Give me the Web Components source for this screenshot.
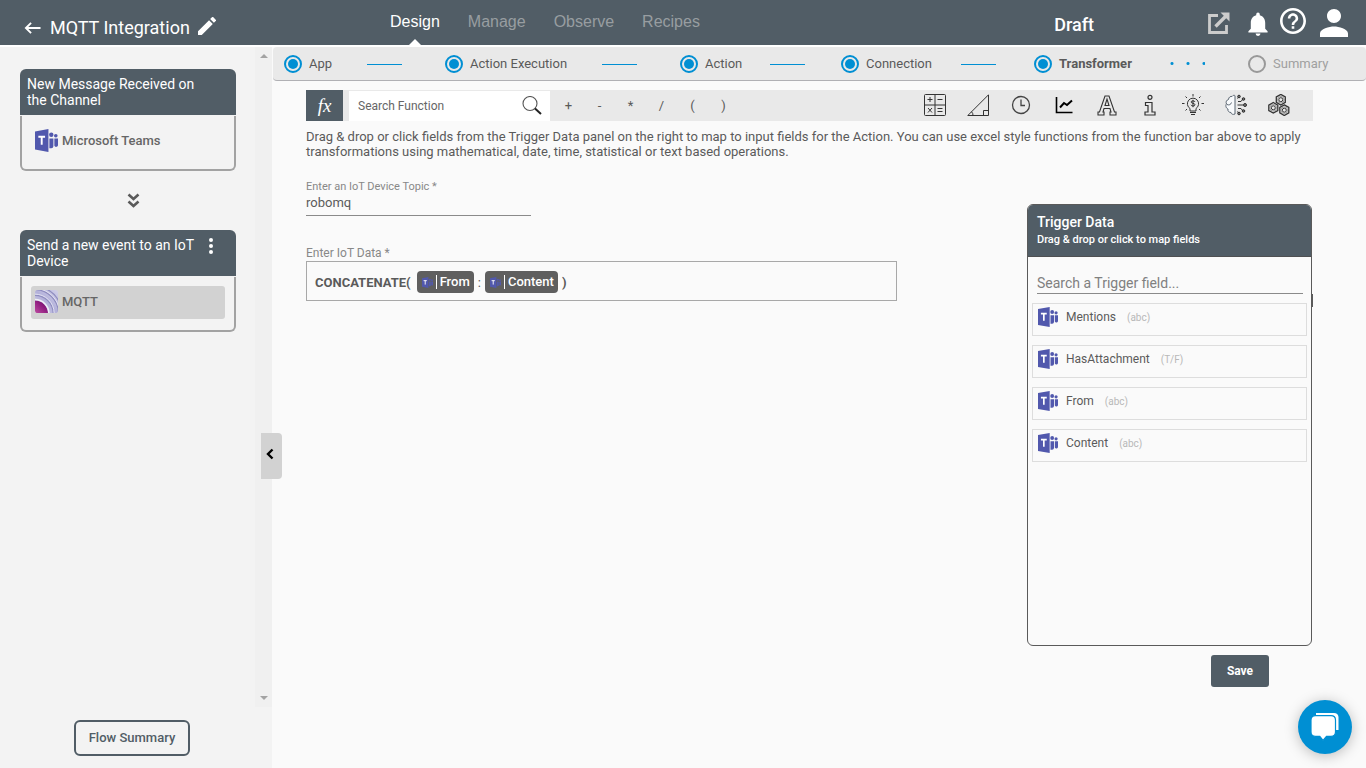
<!DOCTYPE html>
<html lang="en">
<head>
<meta charset="utf-8">
<meta name="viewport" content="width=device-width, initial-scale=1">
<title>MQTT Integration</title>
<style>
html,body{margin:0;height:100%}
body{font-family:Roboto,"Liberation Sans",sans-serif;font-size:13px;color:#5a5a5a;background:#fafafa;
--slate:#515d66;--blue:#008fd3;--bar:#e9e9e9}
</style>
</head>
<body>
<flow-app></flow-app>
<script>
const base = '*{box-sizing:border-box}button,input{font:inherit;color:inherit;margin:0}button{border:0;background:none;padding:0;cursor:pointer}a{color:inherit;text-decoration:none}';
function define(name, css, html, setup) {
  const t = document.createElement('template');
  t.innerHTML = '<style>' + base + css + '</style>' + html;
  customElements.define(name, class extends HTMLElement {
    connectedCallback() {
      if (this.shadowRoot) return;
      this.attachShadow({mode: 'open'}).append(t.content.cloneNode(true));
      if (setup) setup(this, this.shadowRoot);
    }
  });
}

/* Icon set: [viewBox, markup] */
const gear = (x, y) => `<g transform="translate(${x} ${y})"><path d="M0-5.300 4.500-2.700V2.700L0 5.300-4.500 2.700V-2.700Z" stroke-width="1.300"/><circle r="2"/><circle r="3.300" stroke-width=".4"/></g>`;
const icons = {
  back: ['0 0 18 14', '<path d="M17.500 7H2M7.500 1.500 2 7l5.500 5.500" fill="none" stroke="currentColor" stroke-width="2"/>'],
  pencil: ['3 3 18 18', '<path fill="currentColor" d="M3 17.250V21h3.750L17.810 9.940l-3.750-3.750L3 17.250zM20.710 7.040a1 1 0 0 0 0-1.410l-2.340-2.340a1 1 0 0 0-1.410 0l-1.830 1.830 3.750 3.750 1.830-1.830z"/>'],
  open: ['0 0 22 22', '<path d="M10 3.500H1.500v17h17V13" fill="none" stroke="currentColor" stroke-width="2.800"/><path d="m7.500 14.500 11-11" stroke="currentColor" stroke-width="3.400"/><path d="M12.500.5H21.500V9.500Z" fill="currentColor"/>'],
  bell: ['4 2 16 20', '<path fill="currentColor" d="M12 22c1.100 0 2-.9 2-2h-4a2 2 0 0 0 2 2zm6-6v-5c0-3.070-1.640-5.640-4.500-6.320V4a1.500 1.500 0 0 0-3 0v.68C7.630 5.360 6 7.920 6 11v5l-2 2v1h16v-1l-2-2z"/>'],
  help: ['2 2 20 20', '<path fill="currentColor" d="M11 18h2v-2h-2v2zm1-16C6.480 2 2 6.480 2 12s4.480 10 10 10 10-4.480 10-10S17.520 2 12 2zm0 18c-4.410 0-8-3.590-8-8s3.590-8 8-8 8 3.590 8 8-3.590 8-8 8zm0-14c-2.210 0-4 1.790-4 4h2c0-1.100.9-2 2-2s2 .9 2 2c0 2-3 1.750-3 5h2c0-2.250 3-2.500 3-5 0-2.210-1.790-4-4-4z"/>'],
  user: ['4 4 16 16', '<path fill="currentColor" d="M12 12c2.210 0 4-1.790 4-4s-1.790-4-4-4-4 1.790-4 4 1.790 4 4 4zm0 2c-2.670 0-8 1.340-8 4v2h16v-2c0-2.660-5.330-4-8-4z"/>'],
  teams: ['0 0 24 24', '<path fill="#5158ad" d="M0 2.500 14 0v24L0 21.500Z"/><path d="M3.500 8h7M7 8v8.500" stroke="#fff" stroke-width="2" fill="none"/><circle cx="17" cy="6" r="2.300" fill="#5158ad"/><circle cx="21.700" cy="7" r="1.900" fill="#5158ad"/><path fill="#5158ad" d="M15 10h4.200v8a2.200 2.200 0 0 1-2.200 2h-2ZM20.200 10H24v6.500a2 2 0 0 1-3.800 1Z"/>'],
  mqtt: ['0 0 24 24', '<defs><linearGradient id="p" x1="0" y1="1" x2="1" y2="0"><stop offset="0" stop-color="#bd4ba0"/><stop offset=".6" stop-color="#8a1a7c"/><stop offset="1" stop-color="#6d0f68"/></linearGradient><linearGradient id="v" x1="0" y1="1" x2="1" y2="0"><stop offset="0" stop-color="#d3d1ea"/><stop offset=".5" stop-color="#b3b1da"/><stop offset="1" stop-color="#d0cfe8"/></linearGradient><clipPath id="c"><rect width="24" height="24" rx="3"/></clipPath></defs><g clip-path="url(#c)"><rect width="24" height="24" fill="url(#v)"/><path fill="url(#p)" d="M0 11A13.500 13.500 0 0 1 13.500 24H0Z"/><g fill="none"><path d="M0 10A14.500 14.500 0 0 1 14.500 24" stroke="#efeff6" stroke-width="1.600"/><path d="M0 5.500A19 19 0 0 1 19 24M1-.5A25 25 0 0 1 24.500 23M12-1A28 28 0 0 1 25 12" stroke="#8f8dbf" stroke-width="1.300"/><path d="M0 4.300A20 20 0 0 1 20 24M2-1.500A26 26 0 0 1 25.500 22" stroke="#e3e2f1" stroke-width="1"/></g></g>'],
  down: ['0 0 12 16', '<path d="m1 1.500 5 4.500 5-4.500M1 8.500 6 13l5-4.500" fill="none" stroke="currentColor" stroke-width="2.600"/>'],
  dots: ['0 0 4 16', '<g fill="currentColor"><circle cx="2" cy="2" r="2"/><circle cx="2" cy="8" r="2"/><circle cx="2" cy="14" r="2"/></g>'],
  left: ['0 0 8 12', '<path d="M6.500 1.500 2 6l4.500 4.500" fill="none" stroke="#000" stroke-width="2.400"/>'],
  search: ['0 0 20 20', '<circle cx="8" cy="7.500" r="7" fill="none" stroke="#555" stroke-width="1.100"/><path d="m13 12.500 6 5.500" stroke="#222" stroke-width="2"/>'],
  calc: ['0 0 22 22', '<g fill="none" stroke="#333"><rect x=".5" y=".5" width="21" height="21" rx="1"/><path d="M11 .5v21M.5 11h21M3.500 5.500h5M6 3v5M13.500 5.500h5M4 14l4 4.500M8 14l-4 4.500M13.500 14.500h5M13.500 17.500h5"/></g>'],
  triangle: ['0 0 22 22', '<g fill="none" stroke="#333"><path d="M21.500.8v20.700H.8ZM16.500 21v-4.500h5M4.500 17.700A5 5 0 0 1 6 21.500"/></g>'],
  clock: ['0 0 22 22', '<g fill="none" stroke="#444" stroke-width="1.300"><circle cx="11" cy="11" r="8.500"/><path d="M11 5.500v6h4"/></g>'],
  chart: ['0 0 22 22', '<g fill="none" stroke="#000" stroke-width="1.600"><path d="M3.500 3v15.500h16"/><path d="M7 13.500 11 9l3 2 5-4.500" stroke-width="2"/></g>'],
  letter: ['0 0 22 22', '<g fill="none" stroke="#333" stroke-width="1.100"><path d="M9 2h4l5.500 16h1.500v3h-6v-3h1l-1-3.500H8L7 18h1v3H2v-3h1.500Z"/><path d="M9 11.500h4L11 5Z"/></g>'],
  info: ['0 0 22 22', '<g fill="none" stroke="#333" stroke-width="1.200"><circle cx="11" cy="3.300" r="2"/><path d="M6.500 8.500h6.500v9.500h3v3H6v-3h3v-6.500H6.500Z"/></g>'],
  bulb: ['0 0 22 22', '<g fill="none" stroke="#333"><path d="M8 17v-2.500a5.600 5.600 0 1 1 6 0V17ZM8 18.500h6M9 20.500h4M11 2.500V0M2.500 9.500H0M22 9.500h-2.500M5 4 3.500 2.500M17 4l1.500-1.500M5 15l-1.500 1.500M17 15l1.500 1.500"/><path d="M13 8c0-1.500-4-1.500-4 0s4 1 4 2.800-4 1.500-4 0M11 5.800v7.400"/></g>'],
  brain: ['0 0 22 22', '<g fill="none" stroke="#5b6672"><path fill="#f8fafc" d="M10 2v18c-2 1-4 0-4-1.500-2 0-3.500-1.500-3-3.500C.5 14 .5 11 1.500 10 .5 8 1.500 6 3.500 5.500 3.500 3 6 2 7 2.500 8 1 10 1 10 2Z"/><path d="M2 10.500c2 1 4 0 4.500-2"/></g><path d="M13 7.500h3l1.500-2M12.500 11H18M13 14.500h3l1.500 2M12.500 4.500l1.500-2M12.500 17.500l1.500 2" fill="none" stroke="#333"/><g fill="#777" stroke="#222" stroke-width=".9"><circle cx="18.500" cy="5" r="1.300"/><circle cx="20" cy="11" r="1.500"/><circle cx="18.500" cy="17" r="1.300"/><circle cx="14" cy="2.500" r="1.300"/><circle cx="14" cy="19.500" r="1.300"/></g>'],
  gears: ['0 0 22 22', '<g fill="none" stroke="#333">' + gear(12.800, 5.700) + gear(5.300, 13.800) + gear(16.300, 16.200) + '</g>'],
  chat: ['0 0 28 28', '<path fill="#fff" d="M5 0h18q4 0 4.500 4v13H5Z"/><path fill="#fff" stroke="#008fd3" stroke-width="1.200" d="M4.500 2.600h15.500q4.500 0 4.500 4.500v12q0 4.300-4.500 4.300h-4.500l-3.500 4-3.200-4H4.500Q0 23.400 0 19V7.100q0-4.500 4.500-4.500Z"/>'],
};
define('ui-icon', ':host{display:block;flex:none;line-height:0}svg{display:block;width:100%;height:100%}', '', (el, root) => {
  const [box, art] = icons[el.getAttribute('name')];
  const holder = document.createElement('template');
  holder.innerHTML = `<svg viewBox="${box}" aria-hidden="true">${art}</svg>`;
  root.append(holder.content);
});

define('app-header', `
:host{display:grid;grid-template-columns:390px 1fr auto;height:45px;background:var(--slate);color:#fff}
.title{display:flex;align-items:center;padding:10px 0 0 24px;font-size:18px}
.title a{margin-right:9px}.title ui-icon[name=back]{width:17px;height:14px}
h1{margin:0 8px 0 0;font:inherit}
.title button{padding-bottom:3px}
.title ui-icon[name=pencil]{width:18px;height:18px}
nav{display:flex;gap:28px;font:16px/20px "Liberation Sans",sans-serif;color:#989da1;padding-top:12px}
nav a{position:relative}
nav a.on{color:#fff}
nav a.on::after{content:"";position:absolute;left:50%;top:27px;margin-left:-6px;border:6px solid transparent;border-top:0;border-bottom-color:#fff}
.right{display:flex;align-items:center;padding-right:18px}
.status{font-size:18px;font-weight:500;margin-right:114px;padding-top:4px}
.tools{display:flex;align-items:flex-start;gap:16px}
.tools button:nth-child(2){margin-left:2px}
.tools button:nth-child(3){margin:0 -2px 0 -4px}
.open{width:22px;height:22px;color:#ccc;margin-top:4px}.bell{width:20px;height:24px;margin-top:4px}.help{width:26px;height:26px}.user{width:28px;height:28px;margin-top:1px}`,
`<div class="title"><a href="#" aria-label="Back"><ui-icon name="back"></ui-icon></a><h1>MQTT Integration</h1><button aria-label="Rename"><ui-icon name="pencil"></ui-icon></button></div>
<nav><a href="#" class="on">Design</a><a href="#">Manage</a><a href="#">Observe</a><a href="#">Recipes</a></nav>
<div class="right"><span class="status">Draft</span><div class="tools">
<button aria-label="Open"><ui-icon class="open" name="open"></ui-icon></button><button aria-label="Notifications"><ui-icon class="bell" name="bell"></ui-icon></button><button aria-label="Help"><ui-icon class="help" name="help"></ui-icon></button><button aria-label="Account"><ui-icon class="user" name="user"></ui-icon></button></div></div>`);

define('flow-card', `
:host{display:block}
header{display:flex;height:46px;padding:7px;background:var(--slate);border-radius:6px 6px 0 0;color:#fff;font-size:14px;line-height:16px}
h2{margin:0;font:inherit;width:168px}
header button{width:4px;height:16px;margin:1px 0 0 14px}
:host(:not([menu])) header button{display:none}
.body{height:55px;margin-top:1px;padding:9px;border:2px solid #a2a2a2;border-top:0;border-radius:0 0 6px 6px}`,
`<header><h2><slot name="title"></slot></h2><button aria-label="Menu"><ui-icon name="dots"></ui-icon></button></header><div class="body"><slot></slot></div>`);

define('flow-step', `
:host{display:block}
button{display:flex;width:100%;height:33px;padding:0 4px 2px;border-radius:3px;font-size:13px;font-weight:500;gap:4px;align-items:center;color:#666}
:host([selected]) button{background:#d2d2d2}
.icon ui-icon{width:23px;height:23px}`, `<button><span class="icon"></span><slot></slot></button>`,
(el, root) => {
  const i = document.createElement('ui-icon');
  i.setAttribute('name', el.getAttribute('icon'));
  root.querySelector('.icon').append(i);
});

define('flow-sidebar', `
:host{display:flex;flex-direction:column;position:relative;background:#f3f3f3}
.scroll{display:flex;flex:1}
.list{flex:1;padding:22px 19px 0 20px}
.track{width:17px;background:#f0f0f0;display:flex;flex-direction:column;justify-content:space-between;align-items:center;padding:7px 0}
.track::before,.track::after{content:"";border:4px solid transparent}
.track::before{border-top:0;border-bottom-color:#a3a3a3}
.track::after{border-bottom:0;border-top-color:#a3a3a3}
.next{width:13px;height:16px;margin:22px 96px 21px auto;color:#5a5a5a}
footer{height:61px;padding:13px 0 0 74px}
footer button{height:36px;width:116px;border:2px solid var(--slate);border-radius:6px;font-weight:500;padding-bottom:1px;color:var(--slate)}
.fold{position:absolute;right:-10px;top:386px;width:21px;height:46px;border-radius:0 4px 4px 0;background:#d2d2d2;display:grid;place-items:center;padding:0 3px 4px 0}
.fold ui-icon{width:8px;height:12px}`,
`<div class="scroll"><div class="list">
<flow-card><span slot="title">New Message Received on the Channel</span><flow-step icon="teams">Microsoft Teams</flow-step></flow-card>
<ui-icon class="next" name="down"></ui-icon>
<flow-card menu><span slot="title">Send a new event to an IoT Device</span><flow-step icon="mqtt" selected>MQTT</flow-step></flow-card>
</div><div class="track"></div></div>
<footer><button>Flow Summary</button></footer>
<button class="fold" aria-label="Collapse panel"><ui-icon name="left"></ui-icon></button>`);

define('step-bar', `
:host{display:block;height:34px;margin-left:1px;background:var(--bar);border-bottom:1px solid #b0b0b4;border-radius:4px}
ol{list-style:none;margin:0;padding:0 0 0 11px;height:33px;display:grid;grid-template-columns:161fr 235fr 161fr 193fr 214fr 118fr}
li{display:flex;align-items:center;padding-right:8px}
i{width:18px;height:18px;border:2px solid var(--blue);border-radius:50%;margin-right:7px;flex:none;display:grid;place-items:center}
i::before{content:"";width:10px;height:10px;border-radius:50%;background:var(--blue)}
li::after{content:"";flex:none;width:35px;height:1px;background:var(--blue);margin:2px auto 0}
.now{font-weight:700;padding-right:4px}
.now::after{height:3px;margin-top:0;background:radial-gradient(circle at 2px,var(--blue) 1px,transparent 2px) 0 0/16px 3px}
.off{color:#a0a0a0}.off i{border-color:#999}.off i::before,.off::after{display:none}`,
`<ol><li><i></i>App</li><li><i></i>Action Execution</li><li><i></i>Action</li><li><i></i>Connection</li><li class="now" aria-current="step"><i></i>Transformer</li><li class="off"><i></i>Summary</li></ol>`);

define('function-bar', `
:host{display:flex;height:31px;background:var(--bar);padding-right:13px}
.fx{width:37px;background:var(--slate);color:#fff;display:grid;place-items:center;font:italic 19px/20px "Liberation Serif",serif;margin-right:6px}
.search{display:flex;align-items:center;width:201px;background:#fff;padding:0 8px 0 9px;margin-top:1px}
input{flex:1;min-width:0;border:0;outline:0;background:none;padding:0;font-size:12px}
input::placeholder{color:#666;opacity:1}
.search ui-icon{width:20px;height:20px}
.ops{display:flex;padding-left:3px;flex:1}.ops button{width:31px}
.cats{display:flex;padding-bottom:2px}.cats button{width:43px;display:grid;place-items:center}
.cats ui-icon{width:22px;height:22px}`,
`<span class="fx">fx</span><label class="search"><input aria-label="Search Function" placeholder="Search Function"><ui-icon name="search"></ui-icon></label>
<div class="ops"><button>+</button><button>-</button><button>*</button><button>/</button><button>(</button><button>)</button></div>
<div class="cats">${[['calc','Math'],['triangle','Trigonometry'],['clock','Date and time'],['chart','Statistics'],['letter','Text'],['info','Information'],['bulb','Financial'],['brain','Logic'],['gears','Engineering']].map(([n, l]) => `<button aria-label="${l}"><ui-icon name="${n}"></ui-icon></button>`).join('')}</div>`);

define('data-chip', `
:host{display:inline-flex;align-items:center;height:22px;padding:0 4px 0 5px;border-radius:4px;background:#5f5f5f;color:#fff}
ui-icon{width:11px;height:11px;margin-right:3px}
span{border-left:1px solid #fff;height:14px;line-height:14px;padding-left:3px;font-weight:500}`,
`<ui-icon name="teams"></ui-icon><span><slot></slot></span>`);

define('data-form', `
:host{display:block;flex:1;max-width:591px}
label,.label{display:block;color:#888}
label{font-size:11px;line-height:14px}
input{display:block;width:225px;height:22px;border:0;border-bottom:1px solid #8a8a8a;background:none;padding:0 0 4px;outline:0}
.label{font-size:12px;line-height:16px;margin-top:29px}
.formula{display:flex;align-items:center;height:40px;padding:2px 8px 0;border:1px solid #a8a8a8;font-weight:700;gap:4px}
.formula span:first-child{margin-right:2px}
.formula small{font:inherit;font-weight:400}`,
`<label for="topic">Enter an IoT Device Topic *</label><input id="topic" value="robomq">
<div class="label" id="dl">Enter IoT Data *</div><div class="formula" role="textbox" tabindex="0" aria-labelledby="dl"><span>CONCATENATE(</span><data-chip>From</data-chip><small>:</small><data-chip>Content</data-chip><span>)</span></div>`);

define('trigger-field', `
:host{display:block}
button{display:flex;width:100%;height:33px;padding:3px 5px;border:1px solid #ddd;font-size:12px;line-height:20px;text-align:left}
ui-icon{width:20px;height:20px;margin:0 8px 0 0}
small{font-size:10px;line-height:22px;color:#b8b8b8;margin-left:11px}`,
`<button><ui-icon name="teams"></ui-icon><slot></slot><small><slot name="type"></slot></small></button>`);

define('trigger-panel', `
:host{display:block;position:relative;width:285px;height:442px}
.box{height:100%;border:1px solid #5a5a5a;border-radius:6px;overflow:hidden}
header{height:53px;margin:-1px -1px 0;padding:10px 10px 0;background:var(--slate);border-bottom:1px solid #4f5052;color:#fff}
h2{margin:0;font-size:14px;font-weight:500;line-height:16px}
p{margin:3px 0 0;font-size:11px;font-weight:500;line-height:14px}
input{display:block;width:calc(100% - 17px);height:22px;margin:15px 8px 9px 9px;border:0;border-bottom:1px solid #8a8a8a;background:none;padding:0;font-size:14px;outline:0}
input::placeholder{color:#808080;opacity:1}
.fields{display:grid;gap:9px;padding:0 4px}
.grip{position:absolute;right:-1px;top:90px;width:2px;height:13px;background:#5a5a5a}`,
`<div class="box"><header><h2>Trigger Data</h2><p>Drag &amp; drop or click to map fields</p></header>
<input aria-label="Search a Trigger field" placeholder="Search a Trigger field...">
<div class="fields"><trigger-field>Mentions<span slot="type">(abc)</span></trigger-field><trigger-field>HasAttachment<span slot="type">(T/F)</span></trigger-field><trigger-field>From<span slot="type">(abc)</span></trigger-field><trigger-field>Content<span slot="type">(abc)</span></trigger-field></div></div><div class="grip"></div>`);

define('transform-view', `
:host{display:block;padding:9px 53px 0 34px}
p{margin:8px 0 21px;font-size:13px;line-height:15px}
.work{display:flex;justify-content:space-between}
trigger-panel{margin:24px 1px 0 0}
.actions{display:flex;justify-content:flex-end;margin:9px 44px 0 0}
.save{width:58px;height:32px;border-radius:3px;background:var(--slate);color:#fff;font-size:12px;font-weight:700}`,
`<function-bar></function-bar>
<p>Drag &amp; drop or click fields from the Trigger Data panel on the right to map to input fields for the Action. You can use excel style functions from the function bar above to apply transformations using mathematical, date, time, statistical or text based operations.</p>
<div class="work"><data-form></data-form><trigger-panel></trigger-panel></div>
<div class="actions"><button class="save">Save</button></div>`);

define('flow-app', `
:host{display:flex;flex-direction:column;min-height:100vh}
.shell{display:grid;grid-template-columns:272px minmax(0,1fr);flex:1;border-top:2px solid #fff}
.chat{position:fixed;right:14px;bottom:14px;width:54px;height:54px;border-radius:50%;background:var(--blue);box-shadow:0 2px 14px rgba(0,0,0,.25);display:grid;place-items:center}
.chat ui-icon{width:28px;height:28px}`,
`<app-header></app-header><div class="shell"><flow-sidebar></flow-sidebar><main><step-bar></step-bar><transform-view></transform-view></main></div>
<button class="chat" aria-label="Chat"><ui-icon name="chat"></ui-icon></button>`);
</script>
</body>
</html>
